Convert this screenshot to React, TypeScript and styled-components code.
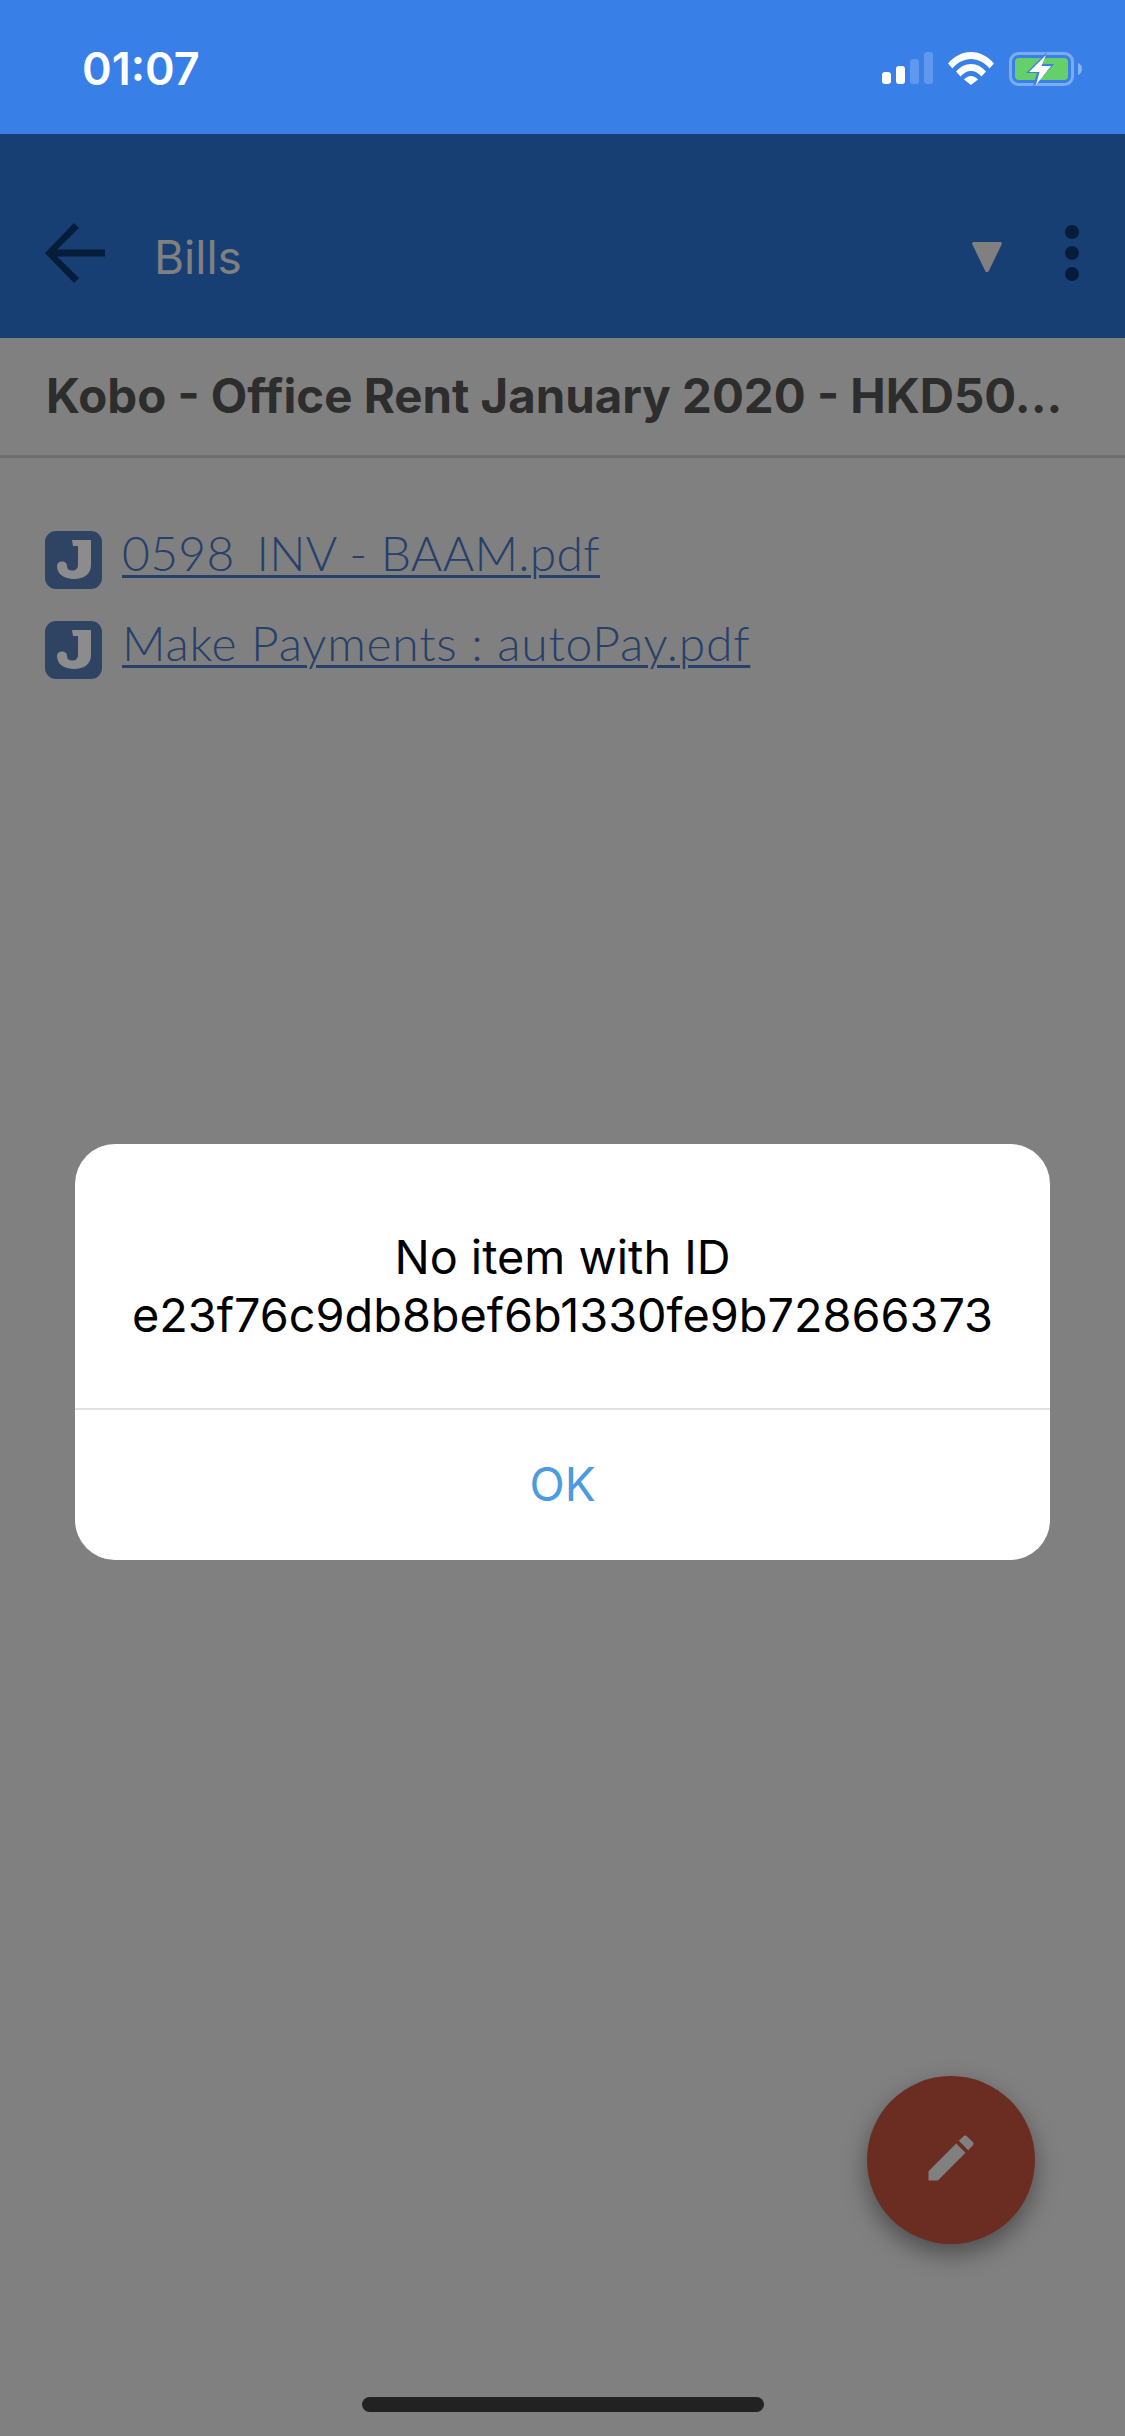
import React from 'react';
import styled, { createGlobalStyle } from 'styled-components';

const GlobalStyle = createGlobalStyle`
  html, body {
    margin: 0;
    padding: 0;
    background: #808080;
  }
  * {
    box-sizing: border-box;
  }
`;

const Screen = styled.div`
  position: relative;
  width: 1125px;
  height: 2436px;
  overflow: hidden;
  background: #808080;
  font-family: Inter, Roboto, "Liberation Sans", sans-serif;
`;

const StatusBar = styled.div`
  height: 134px;
  background: #387fe8;
  display: flex;
  justify-content: space-between;
  padding: 46px 42px 0 82px;
`;

const Clock = styled.span`
  color: #fff;
  font-size: 45px;
  line-height: 46px;
  font-weight: 600;
`;

const StatusIcons = styled.div`
  display: flex;
  gap: 15px;
  height: 36px;
  padding-top: 6px;
  align-items: flex-start;
`;

const AppBar = styled.div`
  height: 204px;
  background: #173f73;
  display: flex;
  align-items: center;
  padding: 34px 46px 0 45px;
`;

const BarTitle = styled.div`
  flex: 1;
  margin-left: 49px;
  color: #808080;
  font-size: 46px;
  line-height: 56px;
  padding-top: 8px;
`;

const Triangle = styled.svg`
  display: block;
  margin-right: 63px;
  margin-top: 8px;
`;

const Dots = styled.div`
  display: flex;
  flex-direction: column;
  gap: 7px;
`;

const Dot = styled.span`
  display: block;
  width: 14px;
  height: 14px;
  border-radius: 50%;
  background: #051c3a;
`;

const Subject = styled.div`
  height: 120px;
  padding: 29px 40px 0 46px;
  border-bottom: 3px solid #6e6e6e;
  color: #2d2d2d;
  font-size: 47.4px;
  line-height: 58px;
  font-weight: 700;
  white-space: nowrap;
  overflow: hidden;
`;

const Attachments = styled.div`
  display: flex;
  flex-direction: column;
  gap: 32px;
  padding: 73px 0 0 45px;
`;

const Attachment = styled.div`
  display: flex;
  gap: 20px;
  height: 58px;
`;

const FileLink = styled.a<{ $tracking: number }>`
  color: #26406a;
  font-family: Lato, sans-serif;
  font-weight: 300;
  font-size: 48px;
  line-height: 44px;
  letter-spacing: ${(p) => p.$tracking}px;
  text-decoration: underline;
  text-decoration-thickness: 3px;
  text-underline-offset: 4px;
`;

const DialogLayer = styled.div`
  position: absolute;
  top: 1144px;
  left: 75px;
  right: 75px;
`;

const Dialog = styled.div`
  height: 416px;
  border-radius: 40px;
  background: #fff;
  display: flex;
  flex-direction: column;
`;

const Message = styled.div`
  height: 266px;
  padding-top: 84px;
  border-bottom: 2px solid #e2e2e2;
  color: #000;
  font-size: 46.8px;
  line-height: 58px;
  text-align: center;
`;

const DialogAction = styled.div`
  flex: 1;
  display: flex;
  align-items: center;
  justify-content: center;
  padding-bottom: 3px;
  color: #4a9be0;
  font-size: 46px;
`;

const Fab = styled.div`
  position: absolute;
  left: 867px;
  top: 2076px;
  width: 168px;
  height: 168px;
  padding-bottom: 5px;
  border-radius: 50%;
  background: #6b2c22;
  box-shadow: 0 10px 24px rgba(0, 0, 0, 0.4);
  display: flex;
  align-items: center;
  justify-content: center;
`;

const HomeIndicator = styled.div`
  position: absolute;
  left: 362px;
  top: 2397px;
  width: 402px;
  height: 15px;
  border-radius: 8px;
  background: #222;
`;

const SignalIcon = () => (
  <svg width="51" height="32" viewBox="0 0 51 32" style={{ display: 'block' }}>
    <rect x="0" y="20" width="9" height="12" rx="3" fill="#fff" />
    <rect x="14" y="14" width="9" height="18" rx="3" fill="#fff" />
    <rect x="28" y="7" width="9" height="25" rx="3" fill="#fff" fillOpacity="0.2" />
    <rect x="42" y="0" width="9" height="32" rx="3" fill="#fff" fillOpacity="0.2" />
  </svg>
);

const WifiIcon = () => (
  <svg width="46" height="33" viewBox="0 0 46 33" style={{ display: 'block' }}>
    <path d="M0 11.500C6 4.500 14 0 23 0s17 4.500 23 11.500l-4.500 5C36.500 10.500 30 7 23 7S9.500 10.500 4.500 16.500z" fill="#fff" />
    <path d="M8 19.500c4-4.500 9-7.500 15-7.500s11 3 15 7.500l-4.500 5C30.500 21 27 19 23 19s-7.500 2-10.500 5.500z" fill="#fff" />
    <path d="M16 27.500c2-2 4.500-3.500 7-3.500s5 1.500 7 3.500L23 33z" fill="#fff" />
  </svg>
);

const BatteryIcon = () => (
  <svg width="74" height="36" viewBox="0 0 74 36" style={{ display: 'block' }}>
    <rect x="1.500" y="1.500" width="62" height="31" rx="8" fill="none" stroke="#fff" strokeOpacity="0.35" strokeWidth="3" />
    <rect x="6" y="6" width="53" height="22" rx="4" fill="#65d069" />
    <path d="M69 11c3 1 4 3.500 4 6s-1 5-4 6z" fill="#fff" fillOpacity="0.4" />
    <path d="M38 0L17 21h11l-4 13-1 2 22-24H33z" fill="#387fe8" />
    <path d="M37 3L20 20h10.500L27 33 42 14H32.500z" fill="#fff" />
  </svg>
);

const BackArrow = () => (
  <svg width="60" height="60" viewBox="0 0 60 60" style={{ display: 'block' }}>
    <path d="M60 26.500H12L34 5l-5-5L0 30l29 30 5-5L12 33.500h48z" fill="#051c3a" />
  </svg>
);

const PencilIcon = () => (
  <svg width="60" height="60" viewBox="0 0 24 24">
    <path
      d="M3 17.250V21h3.750L17.810 9.940l-3.750-3.750L3 17.250zM20.710 7.040c.39-.39.39-1.020 0-1.410l-2.340-2.340c-.39-.39-1.020-.39-1.410 0l-1.830 1.830 3.750 3.750 1.830-1.830z"
      fill="#808080"
    />
  </svg>
);

// app logo, a slab J on a rounded tile
const FileBadge = () => (
  <svg width="57" height="58" viewBox="0 0 57 58" style={{ display: 'block', flex: 'none' }}>
    <rect width="57" height="58" rx="11" fill="#2f4462" />
    <path
      d="M27 9h19v25c0 9-7 14-17 14-10 0-17-5-17-13 0-3 2-4.500 5-4.500 3 0 5 1.500 5 4.500 0 3 2 4.500 5 4.500 4 0 6-2 6-6V15h-5z"
      fill="#8c8c8c"
    />
  </svg>
);

const files = [
  { name: '0598_INV - BAAM.pdf', tracking: 0.3 },
  { name: 'Make Payments : autoPay.pdf', tracking: 0.75 },
];

const App: React.FC = () => {
  return (
    <Screen>
      <GlobalStyle />
      <StatusBar>
        <Clock>01:07</Clock>
        <StatusIcons>
          <SignalIcon />
          <WifiIcon />
          <BatteryIcon />
        </StatusIcons>
      </StatusBar>
      <AppBar>
        <BackArrow />
        <BarTitle>Bills</BarTitle>
        <Triangle width="30" height="30" viewBox="0 0 30 30">
          <path d="M2 0h26c1.500 0 2.300 1.200 1.600 2.500L17 28.500c-.9 2-3 2-4 0L.4 2.500C-.3 1.200.5 0 2 0z" fill="#808080" />
        </Triangle>
        <Dots>
          <Dot />
          <Dot />
          <Dot />
        </Dots>
      </AppBar>
      <Subject>Kobo - Office Rent January 2020 - HKD50...</Subject>
      <Attachments>
        {files.map((file) => (
          <Attachment key={file.name}>
            <FileBadge />
            <FileLink $tracking={file.tracking}>{file.name}</FileLink>
          </Attachment>
        ))}
      </Attachments>
      <DialogLayer>
        <Dialog>
          <Message>
            No item with ID
            <br />
            e23f76c9db8bef6b1330fe9b72866373
          </Message>
          <DialogAction>OK</DialogAction>
        </Dialog>
      </DialogLayer>
      <Fab>
        <PencilIcon />
      </Fab>
      <HomeIndicator />
    </Screen>
  );
};

export default App;
